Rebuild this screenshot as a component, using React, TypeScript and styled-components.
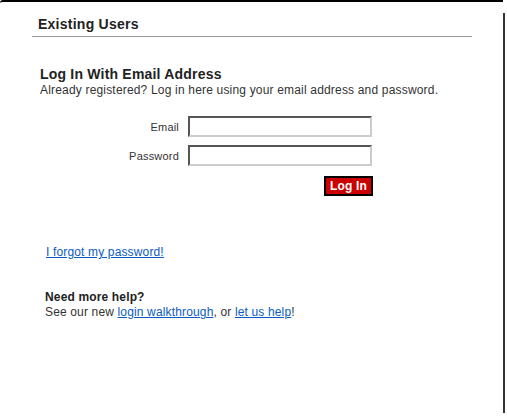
import React from 'react'
import styled, { createGlobalStyle } from 'styled-components'

const GlobalStyle = createGlobalStyle`
  html, body {margin: 0; padding: 0; background: #fff;}
  body {font-family: "Liberation Sans", Arial, sans-serif; color: #333;}
  * {box-sizing: border-box;}
`;

export default function App() {
  return (
    <>
      <GlobalStyle />
      <Page>
        <Panel>
          <SectionHeader>Existing Users</SectionHeader>
          <LoginBlock>
            <h2>Log In With Email Address</h2>
            <p>Already registered? Log in here using your email address and password.</p>
            <Form onSubmit={(e) => e.preventDefault()}>
              <FieldRow>
                <label htmlFor='email'>Email</label>
                <Input id='email' type='text' />
              </FieldRow>
              <FieldRow>
                <label htmlFor='password'>Password</label>
                <Input id='password' type='password' />
              </FieldRow>
              <ButtonRow>
                <SubmitButton type='submit'>Log In</SubmitButton>
              </ButtonRow>
            </Form>
          </LoginBlock>
          <ForgotLink href='#'>I forgot my password!</ForgotLink>
          <HelpBlock>
            <h3>Need more help?</h3>
            <p>See our new <a href='#'>login walkthrough</a>, or <a href='#'>let us help</a>!</p>
          </HelpBlock>
        </Panel>
      </Page>
    </>
  )
}

// styled components
const Page = styled.div`
  width: 503px;
  height: 417px;
  border-top: 2px solid #000;
  border-top-left-radius: 3px;
`;

const Panel = styled.div`
  width: 505px;
  height: 400px;
  margin-top: 11px;
  padding: 0px 31px 0px 32px;
  border-right: 2px solid #333;
`;

const SectionHeader = styled.h1`
  margin: 0px;
  padding: 3px 6px 3px;
  font-size: 14px;
  font-weight: 700;
  line-height: 17px;
  letter-spacing: 0.25px;
  color: #222;
  border-bottom: 1px solid #999;
`;

const LoginBlock = styled.div`
  padding: 29px 0px 0px 8px;

  & > h2 {
    margin: 0px;
    font-size: 14px;
    font-weight: 700;
    line-height: 16px;
    letter-spacing: 0.2px;
    color: #222;
  }
  & > p {
    margin: 1px 0px 0px;
    font-size: 12px;
    line-height: 14px;
    letter-spacing: 0.18px;
    color: #333;
  }
`;

const Form = styled.form`
  display: flex;
  flex-flow: column nowrap;
  gap: 8px;
  width: 333px;
  margin: 19px 0px 0px;
`;

const FieldRow = styled.div`
  display: grid;
  grid-template-columns: 139px 184px;
  column-gap: 9px;
  align-items: center;

  & > label {
    text-align: right;
    font-size: 11px;
    letter-spacing: 0.2px;
    color: #333;
  }
`;

const Input = styled.input`
  width: 184px;
  height: 21px;
  margin: 0px;
  padding: 1px 3px;
  border: 2px solid;
  border-color: #555 #ccc #ccc #555;
  background: #fff;
  font-family: inherit;
  font-size: 12px;
`;

const ButtonRow = styled.div`
  display: flex;
  justify-content: flex-end;
  padding: 2px 0px 0px 0px;
`;

const SubmitButton = styled.button`
  width: 49px;
  height: 20px;
  margin: 0px;
  padding: 0px;
  border: 2px solid #000;
  background: #cc0000;
  color: #fff;
  font-family: inherit;
  font-size: 12px;
  font-weight: 700;
  line-height: 16px;
  letter-spacing: 0.2px;
  cursor: pointer;
`;

const ForgotLink = styled.a`
  display: inline-block;
  margin: 49px 0px 0px 14px;
  font-size: 12px;
  line-height: 14px;
  letter-spacing: 0.15px;
  color: #0a5cc2;
  text-decoration: underline;
`;

const HelpBlock = styled.div`
  padding: 30px 0px 0px 13px;

  & > h3 {
    margin: 0px;
    font-size: 12px;
    font-weight: 700;
    line-height: 14px;
    letter-spacing: 0.15px;
    color: #222;
  }
  & > p {
    margin: 1px 0px 0px;
    font-size: 12px;
    line-height: 14px;
    letter-spacing: 0.15px;
    color: #333;
  }
  & a {color: #0a5cc2; text-decoration: underline;}
`;
